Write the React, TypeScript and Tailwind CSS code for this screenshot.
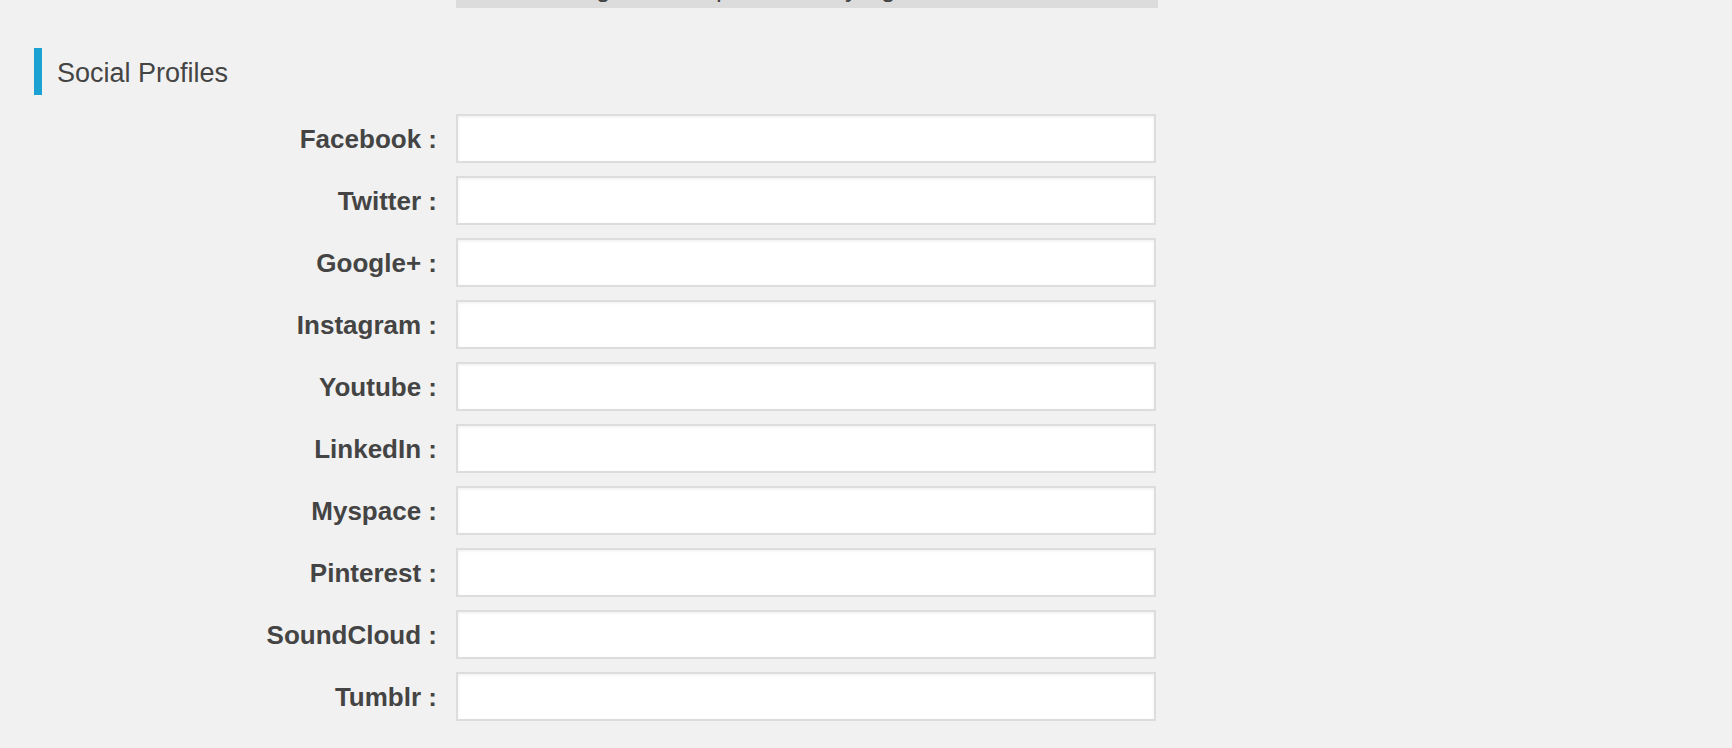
import React from "react";

const fields = [
  "Facebook",
  "Twitter",
  "Google+",
  "Instagram",
  "Youtube",
  "LinkedIn",
  "Myspace",
  "Pinterest",
  "SoundCloud",
  "Tumblr",
];

export default function App() {
  return (
    <div
      className="w-[1732px] h-[748px] bg-[#f1f1f1] overflow-hidden text-[#444]"
      style={{ fontFamily: '"Liberation Sans", Arial, sans-serif' }}
    >
      <div className="ml-[456px] w-[702px] h-[8px] bg-[#dcdcdc] overflow-hidden relative">
        <div className="absolute left-[140px] top-[-26px] text-[26px] leading-[28px] text-[#444] whitespace-pre">
          g
        </div>
        <div className="absolute left-[260px] top-[-26px] text-[26px] leading-[28px] text-[#444] whitespace-pre">
          p
        </div>
        <div className="absolute left-[389px] top-[-26px] text-[26px] leading-[28px] text-[#444] whitespace-pre">
          y
        </div>
        <div className="absolute left-[425px] top-[-26px] text-[26px] leading-[28px] text-[#444] whitespace-pre">
          g
        </div>
      </div>
      <div className="mt-[40px] ml-[34px] flex items-center h-[47px]">
        <div className="w-[8px] h-[47px] bg-[#1ca1d3]" />
        <h2 className="ml-[15px] mt-[4px] text-[27px] font-normal leading-none text-[#444]">
          Social Profiles
        </h2>
      </div>
      <div className="mt-[19px] flex flex-col gap-[13px]">
        {fields.map((f) => (
          <div key={f} className="flex items-center">
            <label className="w-[437px] text-right text-[26px] font-bold text-[#444] leading-none">
              {f} :
            </label>
            <input
              type="text"
              className="ml-[19px] w-[700px] h-[49px] bg-white border-2 border-[#dddddd] shadow-[inset_0_1px_3px_rgba(0,0,0,0.07)] outline-none"
            />
          </div>
        ))}
      </div>
    </div>
  );
}
